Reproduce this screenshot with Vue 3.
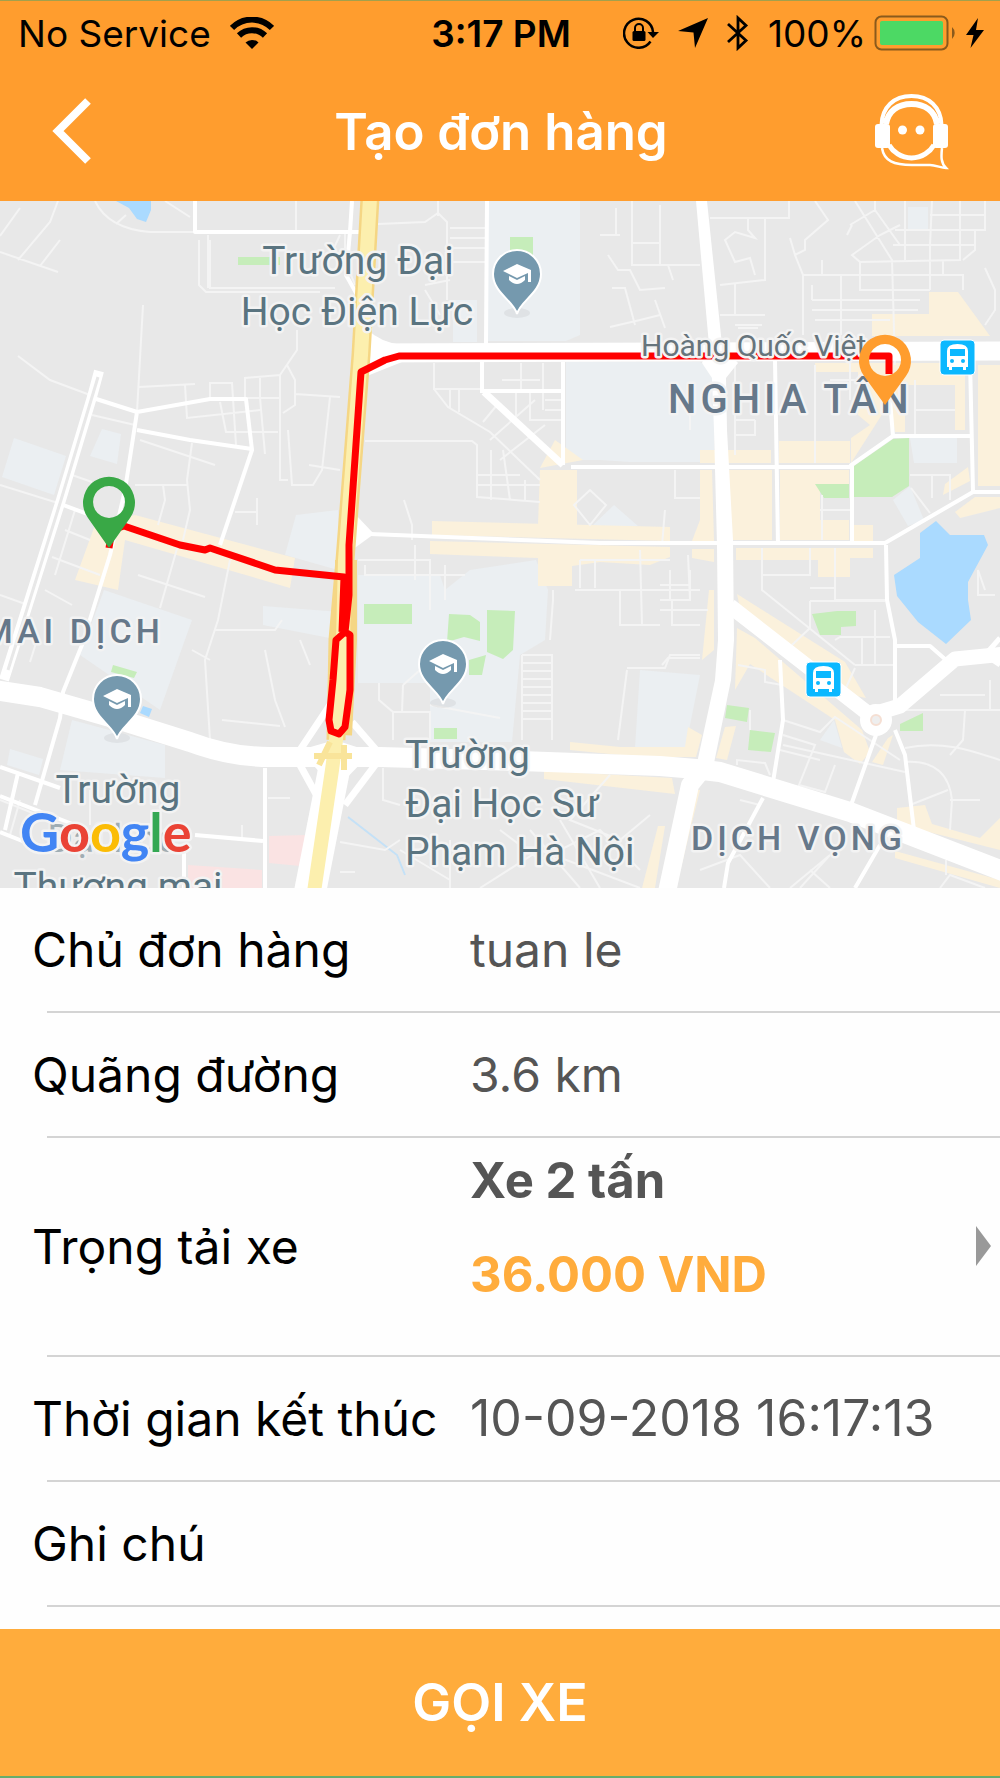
<script setup>
import { ref } from "vue";

const order = {
    owner: 'tuan le',
    distance: '3.6 km',
    truck: 'Xe 2 tấn',
    price: '36.000 VND',
    endTime: '10-09-2018 16:17:13'
};
const note = ref('');

const schools = [
    { x: 517, y: 275 },
    { x: 117, y: 700 },
    { x: 443, y: 665 }
];

const busStops = [
    { x: 940, y: 340 },
    { x: 806, y: 662 }
];

const places = [
    { x: 358, y: 274, text: 'Trường Đại', anchor: 'middle' },
    { x: 357, y: 325, text: 'Học Điện Lực', anchor: 'middle' },
    { x: 405, y: 768, text: 'Trường', anchor: 'start' },
    { x: 405, y: 817, text: 'Đại Học Sư', anchor: 'start' },
    { x: 405, y: 865, text: 'Phạm Hà Nội', anchor: 'start' },
    { x: 118, y: 803, text: 'Trường', anchor: 'middle' },
    { x: 112, y: 852, text: 'Đại học', anchor: 'middle', faint: true },
    { x: 118, y: 900, text: 'Thương mại', anchor: 'middle' }
];

const districts = [
    { x: 668, y: 413, text: 'NGHIA TÂN', big: true },
    { x: -17, y: 643, text: 'MAI DỊCH' },
    { x: 691, y: 850, text: 'DỊCH VỌNG' }
];
</script>

<template>
    <div class="app">
        <header class="header">
            <div class="statusBar">
                <div class="statusLeft">
                    <span>No Service</span>
                    <svg viewBox="0 0 44 32" width="44" height="32" fill="none" stroke="#000">
                        <path d="M2 11 A28 28 0 0 1 42 11" stroke-width="6"></path>
                        <path d="M9 18.500 A18.500 18.500 0 0 1 35 18.500" stroke-width="6"></path>
                        <path d="M22 32 L15.500 25.500 A9.500 9.500 0 0 1 28.500 25.500 Z" fill="#000" stroke="none"></path>
                    </svg>
                </div>
                <b class="time">3:17 PM</b>
                <div class="statusRight">
                    <svg viewBox="0 0 36 32" width="36" height="32">
                        <path d="M27.500 24.500 A14.500 14.500 0 1 1 30 15" fill="none" stroke="#000" stroke-width="2.500"></path>
                        <path d="M24.500 15 H36 L30 21 Z"></path>
                        <rect x="9.500" y="14" width="13" height="10" rx="1.500"></rect>
                        <path d="M12 15 V11 A4 4 0 0 1 20 11 V15" fill="none" stroke="#000" stroke-width="2"></path>
                    </svg>
                    <svg viewBox="0 0 30 30" width="30" height="30">
                        <path d="M30 0 L17 30 L15.500 14.500 L0 13 Z"></path>
                    </svg>
                    <svg viewBox="0 0 22 36" width="22" height="36" fill="none" stroke="#000" stroke-width="2.800">
                        <path d="M1 9 L19 25.500 L11 33 V3 L19 10.500 L1 27"></path>
                    </svg>
                    <div class="power">
                        <span>100%</span>
                        <svg viewBox="0 0 84 36" width="84" height="36">
                            <rect x="1.500" y="1.500" width="72" height="33" rx="6" fill="none" stroke="#8a5a1c" stroke-width="2"></rect>
                            <rect x="6" y="6" width="63" height="24" rx="2" fill="#4cd964"></rect>
                            <path d="M78 12 A8 8 0 0 1 78 24 Z" fill="#8a5a1c"></path>
                        </svg>
                        <svg viewBox="0 0 18 30" width="18" height="30">
                            <path d="M12 0 L0 17 H7.500 L4.500 30 L18 12 H10 Z"></path>
                        </svg>
                    </div>
                </div>
            </div>
            <div class="navBar">
                <button class="iconBtn" aria-label="Quay lại">
                    <svg viewBox="0 0 40 66" width="40" height="66" fill="none" stroke="#fff" stroke-width="8">
                        <path d="M36 3 L6 33 L36 63"></path>
                    </svg>
                </button>
                <h1>Tạo đơn hàng</h1>
                <button class="iconBtn" aria-label="Hỗ trợ">
                    <svg viewBox="0 0 75 77" width="75" height="77" fill="none" stroke="#fff">
                        <path d="M7.500 32 C8 14 20 3 37.500 3 S67 14 67.500 32" stroke-width="4"></path>
                        <path d="M12 31 C14 18 24 11 37.500 11 S61 18 63 31" stroke-width="6"></path>
                        <path d="M9 27 L14 30 M66 27 L61 30" stroke-width="5"></path>
                        <path d="M15 52 A26 26 0 0 0 60 52" stroke-width="5"></path>
                        <rect x="1" y="31" width="15" height="24" rx="3" fill="#fff" stroke="none"></rect>
                        <rect x="59" y="31" width="15" height="24" rx="3" fill="#fff" stroke="none"></rect>
                        <circle cx="28.500" cy="37" r="4.500" fill="#fff" stroke="none"></circle>
                        <circle cx="46" cy="37" r="4.500" fill="#fff" stroke="none"></circle>
                        <path d="M8 55 C10 68 20 72 38 72 L56 72 C62 72 67 75 72 75 C67 70 67 64 68 55" stroke-width="2.500"></path>
                    </svg>
                </button>
            </div>
        </header>

        <svg class="map" viewBox="0 201 1000 687" role="img" aria-label="Bản đồ">
            <rect x="0" y="201" width="1000" height="687" fill="#e8e8e8"></rect>

            <g class="campus">
                <path d="M487 201 H580 V335 L566 341 H487 Z M566 362 H700 L714 372 V450 H700 V462 H630 L600 460 H572 L566 450 Z"></path>
                <path d="M14 438 L66 456 L54 495 L2 477 Z M102 429 L121 434 L117 464 L90 456 Z M296 515 L338 510 V570 L285 555 Z"></path>
                <path d="M104 590 L192 620 L160 710 L80 655 Z M72 720 L165 745 V778 L60 770 Z M10 749 L43 759 L39 775 L7 765 Z"></path>
                <path d="M358 575 H440 L445 590 L470 570 L536 560 L548 590 L545 640 L520 655 L512 742 H430 V683 H358 Z"></path>
                <path d="M263 606 L340 612 V640 L263 625 Z M640 670 L700 675 L685 750 L635 748 Z M910 438 H957 V463 H914 Z M893 500 L910 486 L924 520 L908 526 Z"></path>
                <path d="M908 207 h20 v24 h-20 Z M795 492 h22 v20 h-22 Z M592 526 L614 505 L638 526 Z M820 740 L834 720 L842 748 Z M453 300 h24 v42 h-24 Z"></path>
            </g>
            <g class="blocks">
                <path d="M135 515 L295 558 L290 588 L125 540 L118 590 L75 580 L95 525 Z"></path>
                <path d="M432 521 L670 527 V541 L432 535 Z M430 541 L670 547 V557 L650 565 L600 562 L572 566 V586 H538 V558 L430 554 Z M540 470 H577 V525 H538 Z M555 440 L583 460 L540 468 Z"></path>
                <path d="M700 450 H771 V463 H700 Z M779 441 H850 V463 H779 Z M700 470 H712 L714 541 H692 L700 520 Z M727 470 H772 V540 H732 Z M780 470 H849 V490 H820 V520 H849 V540 H780 Z M854 525 H873 V541 H854 Z"></path>
                <path d="M929 292 H958 L990 336 H872 V314 H929 Z M815 363 H965 V430 H955 V385 H905 V432 H895 L890 402 L851 463 V438 L870 425 L858 415 V372 H815 Z M978 365 H1000 V486 H978 Z"></path>
                <path d="M943 495 L970 481 L968 467 L945 484 Z M955 512 L975 497 H1000 V508 L960 518 Z"></path>
                <path d="M692 549 H714 V562 L692 558 Z M736 548 H873 V558 H850 V577 H818 V560 H736 Z"></path>
                <path d="M709 590 H714 V650 L702 660 Z M737 594 L845 662 L866 698 L852 695 L740 608 Z M737 628 L755 638 L862 730 L870 752 L860 764 L844 752 L835 720 L750 664 L735 690 Z M888 738 L893 735 L883 765 L872 762 Z"></path>
                <path d="M688 727 L702 735 L696 757 H640 L570 750 V742 L620 747 H685 Z M725 727 L736 726 L727 760 L716 758 Z M544 771 L672 778 L675 794 L544 779 Z M697 790 H700 L676 888 H669 Z M658 826 H665 L655 888 H642 Z"></path>
                <path d="M897 808 L925 805 L932 824 L980 838 L1000 818 V850 L897 824 Z M895 851 L1000 880 V888 L895 858 Z"></path>
            </g>
            <g fill="#fae3e3">
                <path d="M269 836 L306 835 L300 866 L269 863 Z M188 865 L262 870 V888 H188 Z"></path>
            </g>
            <g fill="#c6edba">
                <path d="M238 257 H280 V265 H238 Z M510 237 H533 V255 H510 Z M893 439 L909 438 V486 L892 497 H854 V466 Z M815 484 H849 V498 H824 Z"></path>
                <path d="M364 604 H412 V624 H364 Z M449 614 L470 615 L480 622 V641 L464 637 L447 642 Z M487 610 L515 611 L513 650 L503 659 L487 652 Z M469 660 L486 655 L482 675 H469 Z M434 728 H457 V739 H434 Z"></path>
                <path d="M812 614 L837 611 H856 V626 L841 627 V635 H820 Z M727 705 L749 708 L747 722 L725 718 Z M750 730 L775 733 L771 752 L748 750 Z M900 724 L923 713 V731 H900 Z M113 665 L137 672 L134 678 L111 672 Z"></path>
            </g>
            <g fill="#aadaff">
                <path d="M116 201 H151 V210 L146 222 L137 219 L129 208 Z"></path>
                <path d="M920 545 V533 L936 521 L950 535 H984 L988 545 L968 582 V600 L971 620 L946 644 L918 622 L897 596 L894 575 L920 558 Z"></path>
                <path d="M143 706 L152 709 L149 717 L140 713 Z"></path>
            </g>
            <path d="M348 817 L397 855 L405 875" fill="none" stroke="#c4e1f7" stroke-width="2"></path>

            <g class="lanes">
                <path d="M20 208 L0 236 M58 201 L50 222 L18 260 M0 252 L58 272 M60 240 L40 266 M95 201 C105 222 125 230 150 232 H195 M116 224 L126 215 M165 201 L190 217 M296 201 V232"></path>
                <path d="M208 235 V288 M210 240 V288 H335 M199 240 V285 L206 292 H320 M297 330 V350 L280 375 V480 H288 M280 375 L245 378 V398 H280 M287 365 L295 380 V405 L283 413 M295 394 L340 397 M330 397 L322 470 L313 485 H292 L288 430 M309 465 L340 470"></path>
                <path d="M143 305 L137 412 M18 356 L50 380 L90 395 M139 387 L195 384 M185 385 L187 418 L260 410 M210 400 V383 H232 L236 445 M220 402 L226 432 H278 M260 378 V398 L265 454 M92 415 L135 425 M140 440 L215 465 M192 443 L187 480 L190 510 L183 540 M135 485 H187 M163 485 L165 500 L158 525 M235 512 H258 M257 498 V525 M0 485 L58 503 M72 475 L92 482"></path>
                <path d="M65 530 L90 540 M75 510 L55 575 M52 557 L100 575 M45 590 L72 605 M138 575 L205 597 M178 545 L160 608 M230 560 L218 620 L205 660 L210 740 M215 630 H275 L282 620 M192 650 L210 660 M265 650 L275 700 L285 727 M222 720 L280 726 M300 640 L310 665 M0 595 L28 605 M30 662 L36 643"></path>
                <path d="M378 224 L425 222 L438 213 L447 222 V300 M438 201 V216 M450 228 H486 M450 238 H486 M448 248 H486 M448 262 H486 M425 285 L450 280 M333 250 L340 235 M355 285 L345 260 V232 M425 290 L440 315"></path>
                <path d="M434 363 V389 L448 407 L490 432 L540 480 M433 389 H483 M450 389 V408 M459 389 V412 M521 363 V390 M543 363 V410 M502 380 H540 M516 390 V425 M530 390 V420 H563 M545 400 H563 M545 410 H563 M483 422 L497 405 M490 440 L535 400 M500 460 L545 425 M365 441 H472 L477 445 V497 L540 502 M491 450 V500 M476 475 H520 M503 450 L510 500 M525 480 V500 M478 485 H540 M574 505 L590 490 L606 505 L590 525 Z M404 500 L412 525 V540"></path>
                <path d="M600 235 H620 M616 208 V235 M632 201 V265 H660 M632 243 H660 M660 205 V265 M608 255 L618 270 H630 L640 290 L665 288 M612 288 H625 L635 325 M610 327 L640 320 L660 315 M655 300 L665 328"></path>
                <path d="M710 218 H765 V280 L720 285 M789 201 V218 H765 M748 218 V230 L755 238 L735 232 L725 240 L735 262 L750 258 L755 275 M735 283 V315 M720 315 H765 M735 325 H762 M738 328 H758 M815 201 L828 220 L805 240 V250 L795 255 L790 238 M795 255 L803 275 V335 M660 265 H700 M668 265 L673 280"></path>
                <path d="M855 201 L892 260 L895 365 M850 225 L875 210 L900 245 H930 L932 201 M847 235 L852 225 M875 210 V201 M905 201 V260 M930 245 V290 M960 201 V260 L860 262 L852 255 L880 235 L900 225 M895 230 H985 V201 M893 245 H975 M930 215 H985 M975 230 V250 L963 260 M803 275 H963 V290 M822 260 V275 M841 275 V335 M860 262 V290 H930 M812 285 V300 M812 300 H920 M812 310 H918 M815 320 H890 M943 260 V275 M985 268 L995 290 V310 L985 325"></path>
                <path d="M735 365 V455 M815 365 V463 M735 420 H755 M735 422 V435 H755 V420 M690 400 V430 M675 470 V498 H700 M850 400 V363 M830 380 H860 M915 380 V435 M915 410 H955 M910 475 H950 V500 M932 475 V498 M911 488 L930 513 M822 495 V540 M820 510 H850 M665 510 L662 545"></path>
                <path d="M358 560 H430 V610 M365 565 V575 H465 M415 545 V580 M445 565 V600 M670 560 H580 M580 560 V588 M595 560 V588 M575 590 H700 M620 590 V625 H660 M640 550 L642 625 M553 590 V600 L550 640 M379 683 V700 L393 712 H430 V740 M403 685 L402 712 M393 712 V740 M430 705 L500 718 M403 685 L420 670"></path>
                <path d="M522 655 H552 V740 M522 655 V740 M522 663 H552 M522 671 H552 M522 679 H552 M522 687 H552 M522 695 H552 M522 703 H552 M522 711 H552 M522 719 H552 M627 670 L618 740 M627 668 H665 L670 655 H700"></path>
                <path d="M383 768 V800 L400 805 M340 842 L385 850 L400 840 M340 872 H355 M450 840 V888 M400 850 L450 880 M500 830 L540 860 L600 830 L640 870 M530 830 L580 888 M560 820 L600 888 M480 888 L540 850 M540 850 L640 888 M610 775 L570 820 L620 840 L650 815"></path>
                <path d="M670 570 V600 M690 570 V600 M660 585 H690 M660 600 H690 L688 555 M672 600 V625 H700 M660 610 H708 M662 665 L668 658 H700 M762 548 V590 L855 665 M762 575 H810 V548 M835 548 V600 H885 M810 588 H835 M810 601 H885 M810 601 V628 L792 645 M835 640 L840 637 H890 M862 637 V665 M875 610 V665 M855 665 H893 M855 668 L845 690"></path>
                <path d="M738 665 L765 670 V682 L782 685 M750 710 V730 M783 720 L820 732 L835 717 L900 760 M783 735 L815 745 L799 785 L825 792 L835 765 M783 745 L905 772 M737 765 V760 L765 763 L770 775 M740 800 L760 805 M780 750 L820 760 M905 710 H1000 M965 710 L963 740 L950 755 M905 748 C940 740 970 750 1000 760 M905 762 C940 760 950 780 952 800 L950 830 M910 805 L948 790 M950 800 H980 M940 695 H985 M990 680 V710 M985 590 L978 570 V595 H995"></path>
                <path d="M700 870 L740 855 L770 888 M790 888 L830 855 L800 888 M810 870 L830 888 M940 888 L950 875 L985 888 M946 860 V875 M20 800 L10 835 M90 825 V790 M242 825 V840 M268 798 H290 M0 800 L75 830"></path>
            </g>

            <g class="streets">
                <path d="M195 201 V232 H363"></path>
                <path d="M352 201 L350 232 L346 275 L360 300"></path>
                <path d="M90 397 L137 412 L210 399 L246 399 L252 450 L220 545 M137 430 L190 440 L252 449 M137 412 L125 490 L110 555 L82 645 L63 692 L60 718 L35 805 M58 503 L90 515"></path>
                <path d="M0 767 L60 788 M18 773 L5 830 M0 796 L75 825 M0 832 L40 848 M265 768 V888 M195 835 L263 841 M184 850 V888"></path>
                <path d="M487 201 L486 345 M482 362 L482 393 M563 362 V465 M483 391 H563 M571 467 H850 M850 466 L893 436 H972 M890 400 L893 436 M970 360 L973 492 M775 360 L778 545 M852 466 V545"></path>
                <path d="M370 534 L600 543 H885 L973 492 H1000 M886 545 L887 600 L895 640 V705 M896 646 H930 L946 660"></path>
                <path d="M876 735 L850 808 M895 730 L905 755 L914 830 M780 660 L783 720 L773 782 M763 798 L728 863 L724 888 M880 845 L855 888"></path>
            </g>
            <g class="roads">
                <path d="M99 371 L92 397 L61 500 L4 680" stroke-width="10"></path>
                <path d="M98 377 L92 397 L61 500 L8 670" stroke="#e8e8e8" stroke-width="3"></path>
                <path d="M484 392 L563 465" stroke-width="7"></path>
                <path d="M365 353 L1000 351" stroke-width="19"></path>
                <path d="M696 201 H707 L722 345 L738 363 L726 378 L727 430 L733 540 L734 640 L731 680 L714 763 H697 L715 680 L718 640 L717 545 L714 430 L712 378 L702 363 L709 345 Z" fill="#fff" stroke="none"></path>
                <path d="M706 765 L690 785 L667 892" stroke-width="18"></path>
                <path d="M-5 690 L40 697 L120 720 L190 742 Q230 757 270 757 H380 L520 761 L660 766 Q690 768 720 772 L850 812 L1005 872" stroke-width="20"></path>
                <path d="M730 606 L870 715 L900 706 L955 659 L1005 654" stroke-width="15"></path>
                <path d="M985 655 L1000 638 M985 655 L1000 665" stroke-width="5"></path>
                <path d="M345 765 L312 888 M300 750 L330 705 M300 765 L322 805 M352 722 L378 752 M376 764 L345 805" stroke-width="7"></path>
                <path d="M336 760 L310 892" stroke-width="32"></path>
                <path d="M368 330 Q380 342 402 345 V362 L362 378 Z M356 515 L374 534 L352 550 Z M300 750 L335 740 L372 752 L335 790 Z" fill="#fff" stroke="none"></path>
                <circle cx="876" cy="720" r="16" fill="#fff" stroke="none"></circle>
                <circle cx="876" cy="720" r="5" fill="#eee" stroke="#f5dfd3" stroke-width="2"></circle>
            </g>
            <g fill="none">
                <path d="M370 198 L361 355 L345 560 L338 640 L336 740" stroke="#f5d684" stroke-width="19"></path>
                <path d="M346 560 V640 L341 735" stroke="#f5d684" stroke-width="22"></path>
                <path d="M370 198 L361 355 L345 560 L343 640 L336 740 L332 770 L314 892" stroke="#fcefae" stroke-width="14"></path>
                <path d="M319 765 L330 742 M344 745 V770 M314 756 H352" stroke="#f9e49a" stroke-width="6"></path>
            </g>

            <g class="labels">
                <text v-for="place in places" :key="place.text + place.y" :class="{ faint: place.faint }" :x="place.x" :y="place.y" :text-anchor="place.anchor">{{ place.text }}</text>
            </g>

            <g class="route">
                <path d="M109 548 L112 530 L124 526 L180 545 L205 550 L210 548 L275 570 L344 577 L342 632"></path>
                <path d="M889 374 V356 H399 L385 360 L361 372 L349 545 L349 595 L345 632 L336 640 L333 680 L329 720 L331 731 L339 734 L345 727 L350 690 V635 L342 630"></path>
            </g>

            <text class="road" x="641" y="356">Hoàng Quốc Việt</text>
            <text v-for="district in districts" :key="district.text" :class="['district', { big: district.big }]" :x="district.x" :y="district.y">{{ district.text }}</text>

            <g v-for="school in schools" :key="school.x" :transform="`translate(${school.x} ${school.y})`">
                <ellipse cx="0" cy="38" rx="13" ry="5" fill="#000" opacity="0.05"></ellipse>
                <path d="M0 39 C-3 26 -24 18 -24 -1 A24 24 0 0 1 24 -1 C24 18 3 26 0 39 Z" fill="#7599ae" stroke="#fff" stroke-width="2"></path>
                <path d="M-14 -4 L0 -11 L14 -5 V7 H11 V-2 L0 3 Z" fill="#fff"></path>
                <path d="M-8 1 L0 5 L8 1 V5 Q0 13 -8 5 Z" fill="#fff"></path>
            </g>

            <g v-for="stop in busStops" :key="stop.x" :transform="`translate(${stop.x} ${stop.y})`">
                <rect x="0" y="0" width="35" height="35" rx="4" fill="#0bb8ff" stroke="#fff" stroke-width="1"></rect>
                <path d="M7 11 Q7 4 17.500 4 T28 11 V27 H26 V30 H23 V27 H12 V30 H9 V27 H7 Z" fill="#fff"></path>
                <path d="M10 9 H25 V16 H10 Z" fill="#0bb8ff"></path>
                <circle cx="12" cy="21" r="2" fill="#0bb8ff"></circle>
                <circle cx="23" cy="21" r="2" fill="#0bb8ff"></circle>
            </g>

            <path fill="#39a846" fill-rule="evenodd" d="M109 548 L88 518 A26 26 0 1 1 130 518 Z M109 486 a16 16 0 1 0 0.100 0 Z"></path>
            <path fill="#ff9d2e" fill-rule="evenodd" d="M885 405 L864 376 A26 26 0 1 1 906 376 Z M885 344 a16 16 0 1 0 0.100 0 Z"></path>

            <text class="google" x="20" y="852"><tspan fill="#4285f4">G</tspan><tspan fill="#ea4335">o</tspan><tspan fill="#fbbc05">o</tspan><tspan fill="#4285f4">g</tspan><tspan fill="#34a853">l</tspan><tspan fill="#ea4335">e</tspan></text>
        </svg>

        <main class="details">
            <div class="row">
                <span class="label">Chủ đơn hàng</span>
                <span class="value">{{ order.owner }}</span>
            </div>
            <div class="row">
                <span class="label">Quãng đường</span>
                <span class="value">{{ order.distance }}</span>
            </div>
            <button class="row truckRow">
                <span class="label">Trọng tải xe</span>
                <span class="truck">
                    <b>{{ order.truck }}</b>
                    <b class="price">{{ order.price }}</b>
                </span>
                <svg viewBox="0 0 15 40" width="15" height="40">
                    <path d="M0 0 L15 20 L0 40 Z" fill="#999"></path>
                </svg>
            </button>
            <div class="row">
                <span class="label">Thời gian kết thúc</span>
                <time class="value date">{{ order.endTime }}</time>
            </div>
            <div class="row">
                <label class="label" for="note">Ghi chú</label>
                <input id="note" class="value" type="text" v-model="note">
            </div>
        </main>

        <button class="callBtn">GỌI XE</button>
    </div>
</template>

<style>
body {
    margin: 0;
}
</style>

<style scoped>
.app {
    min-height: 100vh;
    display: flex;
    flex-direction: column;
    box-sizing: border-box;
    background-color: #fefefe;
    border-top: 1px solid #a3a04c;
    border-bottom: 2px solid #66ad6c;
    font-family: Inter, "Noto Sans", sans-serif;
    color: #000;
}

button {
    border: none;
    background: none;
    padding: 0;
    color: inherit;
    font-family: inherit;
    cursor: pointer;
}

svg {
    display: block;
    flex-shrink: 0;
}

.header {
    background-color: #ff9d2e;
}

.statusBar {
    display: grid;
    grid-template-columns: 1fr auto 1fr;
    align-items: center;
    height: 64px;
    padding: 0 16px 0 18px;
    font-size: 37px;
}

.statusLeft,
.statusRight {
    display: flex;
    align-items: center;
    gap: 19px;
}

.statusRight {
    justify-content: flex-end;
}

.power {
    display: flex;
    align-items: center;
    gap: 8px;
}

.time {
    font-weight: 600;
}

.navBar {
    display: flex;
    align-items: center;
    justify-content: space-between;
    box-sizing: border-box;
    height: 136px;
    padding: 0 50px 4px 52px;
}

.iconBtn {
    width: 76px;
}

h1 {
    margin: 0;
    font-size: 51px;
    font-weight: 600;
    color: #fff;
}

.map {
    width: 100%;
    height: auto;
}

.campus {
    fill: #ebeff2;
}

.blocks {
    fill: #fbf1dc;
}

.lanes {
    fill: none;
    stroke: #f4f4f4;
    stroke-width: 2;
}

.streets {
    fill: none;
    stroke: #fff;
    stroke-width: 4;
    stroke-linejoin: round;
}

.roads {
    fill: none;
    stroke: #fff;
    stroke-linejoin: round;
}

.map text {
    paint-order: stroke;
    stroke: #f3f3f3;
    stroke-width: 5px;
    stroke-linejoin: round;
}

.labels {
    font-family: Roboto, sans-serif;
    font-size: 39px;
    fill: #5a7480;
}

.faint {
    opacity: 0.5;
}

.road {
    font-family: Roboto, sans-serif;
    font-size: 30px;
    fill: #66747c;
}

.district {
    font-family: Roboto, sans-serif;
    font-size: 34px;
    font-weight: 500;
    letter-spacing: 4px;
    fill: #66788a;
}

.district.big {
    font-size: 40px;
}

.map .google {
    font-family: Lato, sans-serif;
    font-size: 54px;
    font-weight: 700;
}

.route {
    fill: none;
    stroke: #f00;
    stroke-width: 7;
    stroke-linejoin: round;
}

.details {
    flex: 1;
}

.row {
    position: relative;
    display: grid;
    grid-template-columns: 438px 1fr auto;
    align-items: center;
    box-sizing: border-box;
    width: 100%;
    min-height: 125px;
    padding: 0 9px 3px 32px;
    font-size: 48px;
    text-align: left;
}

.row::after {
    content: "";
    position: absolute;
    left: 47px;
    right: 0;
    bottom: 0;
    height: 2px;
    background-color: #d4d4d4;
}

.value {
    color: #555;
}

.date {
    font-size: 50px;
}

input.value {
    width: 100%;
    border: none;
    outline: none;
    padding: 0;
    background: none;
    font: inherit;
}

.truckRow {
    min-height: 219px;
}

.truck {
    display: flex;
    flex-direction: column;
    gap: 38px;
    padding: 14px 0 51px;
    font-size: 49px;
    line-height: 56px;
    color: #555;
}

.price {
    color: #ffac3c;
}

.callBtn {
    height: 147px;
    background-color: #ffac3c;
    color: #fff;
    font-size: 52px;
    font-weight: 600;
}
</style>
